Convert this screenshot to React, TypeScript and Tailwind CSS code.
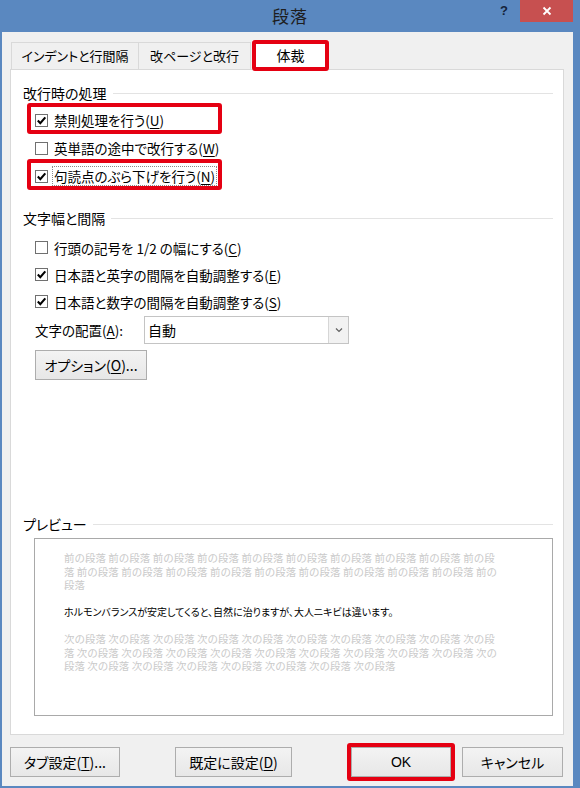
import React from 'react';

const prevLines = [
  '前の段落 前の段落 前の段落 前の段落 前の段落 前の段落 前の段落 前の段落 前の段落 前の段',
  '落 前の段落 前の段落 前の段落 前の段落 前の段落 前の段落 前の段落 前の段落 前の段落 前の',
  '段落',
];
const nextLines = [
  '次の段落 次の段落 次の段落 次の段落 次の段落 次の段落 次の段落 次の段落 次の段落 次の段',
  '落 次の段落 次の段落 次の段落 次の段落 次の段落 次の段落 次の段落 次の段落 次の段落 次の',
  '段落 次の段落 次の段落 次の段落 次の段落 次の段落 次の段落 次の段落',
];

function GroupHeading({ children }: { children: React.ReactNode }) {
  return (
    <div className="flex items-center h-4 pl-[12px] pr-[10px]">
      <span className="text-[14px] leading-4 text-black whitespace-nowrap">{children}</span>
      <div className="flex-1 h-px bg-[#e3e3e3] ml-[6px]" />
    </div>
  );
}

function Checkbox({ checked }: { checked: boolean }) {
  return (
    <span className="w-[13px] h-[13px] border border-[#707070] bg-white flex items-center justify-center shrink-0">
      {checked && (
        <svg width="11" height="11" viewBox="0 0 11 11">
          <path d="M1.8 5.6 L4.3 8.2 L9.3 2.4" fill="none" stroke="#000" strokeWidth="2.1" />
        </svg>
      )}
    </span>
  );
}

function RedBox({ className }: { className: string }) {
  // annotation frame drawn over the dialog
  return <span className={`absolute border-4 border-[#e50012] rounded-[3px] pointer-events-none ${className}`} />;
}

function CheckRow({
  checked,
  label,
  mn,
  highlight,
  focus,
  height,
}: {
  checked: boolean;
  label: string;
  mn: string;
  highlight?: boolean;
  focus?: boolean;
  height: string;
}) {
  return (
    <div className={`relative flex items-center ml-[24px] ${height}`}>
      {highlight && <RedBox className="left-[-8px] top-[-3px] bottom-0 w-[195px]" />}
      <Checkbox checked={checked} />
      <span
        className={`ml-[4px] text-[13.5px] leading-[18px] text-black whitespace-nowrap px-[1px] ${
          focus ? 'border border-dotted border-[#8a8a8a]' : 'border border-transparent'
        }`}
      >
        {label}(<span className="underline underline-offset-2">{mn}</span>)
      </span>
    </div>
  );
}

function Button({ children, w }: { children: React.ReactNode; w: string }) {
  return (
    <div
      className={`${w} h-[30px] border border-[#adadad] bg-gradient-to-b from-[#f3f3f3] to-[#e7e7e7] flex items-center justify-center text-[14px] text-black whitespace-nowrap`}
    >
      {children}
    </div>
  );
}

export default function App() {
  return (
    <div className="w-[580px] h-[788px] bg-[#5a88c0] flex flex-col font-['Noto_Sans_CJK_JP','Noto_Sans',sans-serif] [font-feature-settings:'palt'] overflow-hidden">
      {/* Title bar */}
      <div className="h-[32px] grid grid-cols-[1fr_auto_1fr] shrink-0">
        <div />
        <div className="text-[17px] leading-[32px] text-[#1e1e1e] tracking-[1px]">段落</div>
        <div className="flex justify-end items-start pr-[7px]">
          <span className="text-[13px] font-bold leading-[22px] text-[#15233a] mr-[12px] font-['Liberation_Sans',sans-serif]">?</span>
          <div className="w-[53px] h-[22px] bg-[#c75050] flex items-center justify-center">
            <svg width="10" height="10" viewBox="0 0 10 10">
              <path d="M1.5 1.5 L8.5 8.5 M8.5 1.5 L1.5 8.5" stroke="#fff" strokeWidth="1.8" />
            </svg>
          </div>
        </div>
      </div>

      {/* Body */}
      <div className="flex-1 ml-[2px] mr-[7px] mb-[2px] bg-[#f0f0f0] flex flex-col pl-[8px] pr-[9px]">
        {/* Tabs */}
        <div className="mt-[8px] h-[29px] flex items-end pl-[1px] relative z-10">
          <div className="h-[27px] w-[128px] border border-b-0 border-[#d9d9d9] bg-[#f0f0f0] flex items-center justify-center text-[13px] text-black">
            インデントと行間隔
          </div>
          <div className="h-[27px] w-[112px] border border-l-0 border-b-0 border-[#d9d9d9] bg-[#f0f0f0] flex items-center justify-center text-[13px] text-black">
            改ページと改行
          </div>
          <div className="relative h-[31px] w-[77px] ml-[1px] -mb-[2px] bg-white flex items-center justify-center text-[14px] text-black">
            <RedBox className="inset-0" />
            体裁
          </div>
        </div>

        {/* Tab panel */}
        <div className="h-[666px] border border-[#d9d9d9] bg-white flex flex-col pt-[15px]">
          <GroupHeading>改行時の処理</GroupHeading>
          <div className="mt-[5px] flex flex-col">
            <CheckRow checked label="禁則処理を行う" mn="U" highlight height="h-7" />
            <CheckRow checked={false} label="英単語の途中で改行する" mn="W" height="h-7" />
            <CheckRow checked label="句読点のぶら下げを行う" mn="N" highlight focus height="h-7" />
          </div>

          <div className="mt-[20px]">
            <GroupHeading>文字幅と間隔</GroupHeading>
          </div>
          <div className="mt-[8px] flex flex-col">
            <CheckRow checked={false} label="行頭の記号を 1/2 の幅にする" mn="C" height="h-[27px]" />
            <CheckRow checked label="日本語と英字の間隔を自動調整する" mn="E" height="h-[27px]" />
            <CheckRow checked label="日本語と数字の間隔を自動調整する" mn="S" height="h-[27px]" />
          </div>

          <div className="mt-[1px] ml-[24px] h-[28px] flex items-center">
            <span className="w-[109px] text-[13.5px] text-black whitespace-nowrap">
              文字の配置(<span className="underline underline-offset-2">A</span>):
            </span>
            <div className="w-[205px] h-[28px] border border-[#c4c4c4] bg-white flex">
              <span className="flex-1 pl-[3px] text-[14px] leading-[26px] text-black">自動</span>
              <span className="w-[20px] border-l border-[#d6d6d6] bg-[#f2f2f2] flex items-center justify-center">
                <svg width="8" height="6" viewBox="0 0 8 6">
                  <path d="M1 1.5 L4 4.5 L7 1.5" fill="none" stroke="#606060" strokeWidth="1.2" />
                </svg>
              </span>
            </div>
          </div>

          <div className="mt-[6px] ml-[24px]">
            <Button w="w-[112px]">
              オプション(<span className="underline underline-offset-2">O</span>)...
            </Button>
          </div>

          <div className="mt-[136px]">
            <GroupHeading>プレビュー</GroupHeading>
          </div>
          <div className="mt-[6px] ml-[23px] w-[519px] h-[178px] border border-[#a9a9a9] bg-white pt-[12px] pl-[29px] text-[10.5px] leading-[13.5px] [font-feature-settings:normal]">
            {prevLines.map((l) => (
              <div key={l} className="h-[13.5px] whitespace-nowrap text-[#cacaca]">{l}</div>
            ))}
            <div className="h-[13.5px]" />
            <div className="h-[13.5px] whitespace-nowrap text-black text-[10px] [font-feature-settings:'palt']">
              ホルモンバランスが安定してくると、自然に治りますが、大人ニキビは違います。
            </div>
            <div className="h-[13.5px]" />
            {nextLines.map((l) => (
              <div key={l} className="h-[13.5px] whitespace-nowrap text-[#cacaca]">{l}</div>
            ))}
          </div>
        </div>

        {/* Bottom buttons */}
        <div className="mt-[12px] h-[30px] flex">
          <Button w="w-[110px]">
            タブ設定(<span className="underline underline-offset-2">T</span>)...
          </Button>
          <div className="ml-[55px]">
            <Button w="w-[117px]">
              既定に設定(<span className="underline underline-offset-2">D</span>)
            </Button>
          </div>
          <div className="ml-[59px] relative">
            <RedBox className="-inset-[4px]" />
            <Button w="w-[100px]">
              <span className="font-['Liberation_Sans',sans-serif]">OK</span>
            </Button>
          </div>
          <div className="ml-[11px]">
            <Button w="w-[101px]">キャンセル</Button>
          </div>
        </div>
      </div>
    </div>
  );
}
